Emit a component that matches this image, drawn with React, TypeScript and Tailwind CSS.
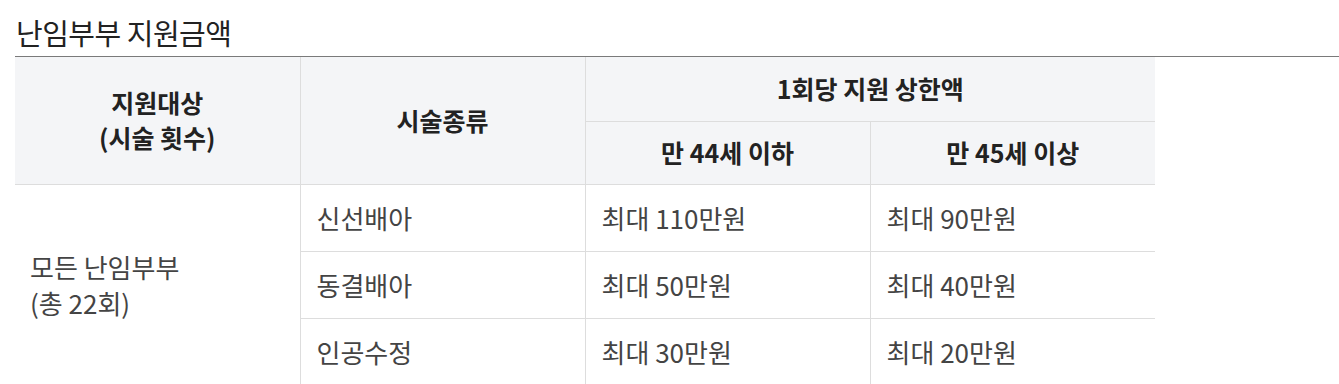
import React from "react";

const font = { fontFamily: '"Noto Sans CJK KR", "Noto Sans", sans-serif' };

export default function App() {
  const rows = [
    ["신선배아", "최대 110만원", "최대 90만원"],
    ["동결배아", "최대 50만원", "최대 40만원"],
    ["인공수정", "최대 30만원", "최대 20만원"],
  ];
  return (
    <div className="bg-white w-[1339px] h-[384px] overflow-hidden" style={font}>
      <div className="ml-[15px] h-[57px] border-b border-[#7a7a7a] flex items-center">
        <h2 className="pl-[1px] pt-[8px] text-[29px] leading-[34px] text-[#222] font-normal tracking-[-0.5px]">
          난임부부 지원금액
        </h2>
      </div>
      <table className="ml-[15px] w-[1140px] table-fixed border-collapse text-[26px]">
        <colgroup>
          <col className="w-[285px]" />
          <col className="w-[285px]" />
          <col className="w-[285px]" />
          <col className="w-[285px]" />
        </colgroup>
        <thead>
          <tr className="h-[64px]">
            <th
              rowSpan={2}
              className="bg-[#f4f5f7] border-r border-b border-[#dddddd] font-bold text-[#222] text-[25px] leading-[35px] text-center align-middle"
            >
              지원대상
              <br />
              (시술 횟수)
            </th>
            <th
              rowSpan={2}
              className="bg-[#f4f5f7] border-r border-b border-[#dddddd] font-bold text-[#222] text-[25px] text-center align-middle"
            >
              시술종류
            </th>
            <th
              colSpan={2}
              className="bg-[#f4f5f7] border-b border-[#dddddd] font-bold text-[#222] text-[25px] text-center align-middle"
            >
              1회당 지원 상한액
            </th>
          </tr>
          <tr className="h-[63px]">
            <th className="bg-[#f4f5f7] border-r border-b border-[#dddddd] font-bold text-[#222] text-[25px] text-center align-middle">
              만 44세 이하
            </th>
            <th className="bg-[#f4f5f7] border-b border-[#dddddd] font-bold text-[#222] text-[25px] text-center align-middle">
              만 45세 이상
            </th>
          </tr>
        </thead>
        <tbody>
          {rows.map((r, i) => (
            <tr key={i} className="h-[67px]">
              {i === 0 && (
                <td
                  rowSpan={3}
                  className="border-r border-[#dddddd] text-[#444] pl-[15px] leading-[36px] align-middle"
                >
                  모든 난임부부
                  <br />
                  (총 22회)
                </td>
              )}
              <td className="border-r border-b border-[#dddddd] text-[#444] pl-[16px] align-middle">{r[0]}</td>
              <td className="border-r border-b border-[#dddddd] text-[#444] pl-[16px] align-middle">{r[1]}</td>
              <td className="border-b border-[#dddddd] text-[#444] pl-[16px] align-middle">{r[2]}</td>
            </tr>
          ))}
        </tbody>
      </table>
    </div>
  );
}
